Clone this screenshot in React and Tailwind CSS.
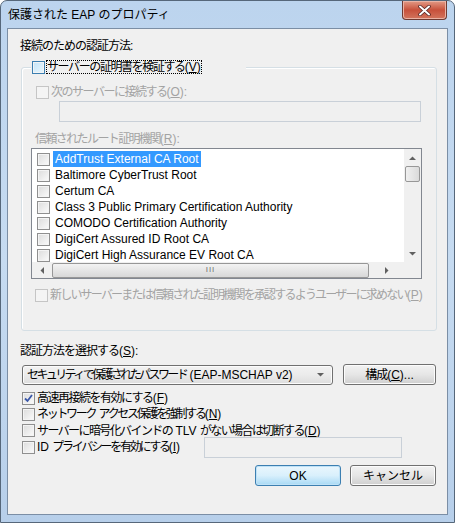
import React from 'react';

const font = { fontFamily: '"Liberation Sans", "Noto Sans CJK JP", sans-serif' };

const certs = [
  'AddTrust External CA Root',
  'Baltimore CyberTrust Root',
  'Certum CA',
  'Class 3 Public Primary Certification Authority',
  'COMODO Certification Authority',
  'DigiCert Assured ID Root CA',
  'DigiCert High Assurance EV Root CA',
];

// latin run inside a tightened Japanese label
const L = ({ children }) => <span className="tracking-normal">{children}</span>;
// access key, e.g. (V)
const Key = ({ k }) => (
  <span className="tracking-normal">
    (<u>{k}</u>)
  </span>
);

// Win7-style checkbox
const Check = ({ state = 'normal', checked = false }) => {
  let box = 'border-[#8f8f8f] bg-gradient-to-br from-[#dcdcdc] to-[#fbfbfb]';
  if (state === 'disabled') box = 'border-[#c5c5c5] bg-[#f4f4f4]';
  if (state === 'hot') box = 'border-[#3c7fb1] bg-gradient-to-br from-[#c4e5f9] to-[#e9f6fd]';
  return (
    <span className={`relative inline-block w-[13px] h-[13px] shrink-0 border ${box} shadow-[inset_0_0_0_1px_#f4f4f4]`}>
      {checked && (
        <svg className="absolute left-[1px] top-[1px]" width="9" height="9" viewBox="0 0 9 9">
          <path d="M1 4.5 L3.5 7 L8 1" fill="none" stroke="#3a57a8" strokeWidth="1.8" />
        </svg>
      )}
    </span>
  );
};

const Arrow = ({ dir }) => {
  const paths = {
    up: 'M0 4 L3.5 0.5 L7 4 Z',
    down: 'M0 0 L7 0 L3.5 3.5 Z',
    left: 'M4 0 L4 7 L0.5 3.5 Z',
    right: 'M0 0 L3.5 3.5 L0 7 Z',
  };
  const vertical = dir === 'up' || dir === 'down';
  return (
    <svg width={vertical ? 7 : 4} height={vertical ? 4 : 7} viewBox={vertical ? '0 0 7 4' : '0 0 4 7'}>
      <path d={paths[dir]} fill="#606060" />
    </svg>
  );
};

const Button = ({ children, primary }) => (
  <div
    className={`w-[86px] h-[21px] flex items-center justify-center rounded-[3px] border text-[12px] text-black ${
      primary
        ? 'border-[#3c7fb1] bg-gradient-to-b from-[#eaf6fd] via-[#d9f0fc] to-[#a7d9f5] shadow-[inset_0_0_0_1px_#bfe2f7]'
        : 'border-[#707070] bg-gradient-to-b from-[#f2f2f2] via-[#e6e6e6] to-[#cfcfcf] shadow-[inset_0_0_0_1px_#fcfcfc]'
    }`}
  >
    {children}
  </div>
);

export default function App() {
  return (
    <div style={font} className="w-[455px] h-[523px] overflow-hidden bg-white">
      <div className="w-[455px] h-[523px] flex flex-col rounded-t-[7px] border border-[#56677a] bg-gradient-to-b from-[#bcd4ee] via-[#c6dbf1] to-[#b7cfea] px-[6px] pb-[7px]">
        {/* title bar */}
        <div className="h-[27px] flex items-start justify-between">
          <div className="pt-[4px] pl-[1px] text-[12px] leading-[20px] text-black">保護された EAP のプロパティ</div>
          <div className="mr-[1px] w-[45px] h-[19px] rounded-b-[4px] border border-t-0 border-[#6e3a32] bg-gradient-to-b from-[#e29a86] via-[#c7503b] to-[#d2745d] flex items-center justify-center shadow-[inset_0_0_0_1px_#eab3a5]">
            <svg width="13" height="11" viewBox="0 0 13 11">
              <path d="M2 1.5 L11 9.5 M11 1.5 L2 9.5" stroke="#4a2020" strokeWidth="3.4" strokeLinecap="round" />
              <path d="M2 1.5 L11 9.5 M11 1.5 L2 9.5" stroke="#ffffff" strokeWidth="2" strokeLinecap="round" />
            </svg>
          </div>
        </div>

        {/* client area */}
        <div className="flex-1 border border-[#7b8ea5] bg-[#f0f0f0] pl-[12px] pr-[11px] pt-[9px] text-[12px] leading-[16px] tracking-[-1px] text-black">
          <div>接続のための認証方法:</div>

          {/* group box */}
          <div className="relative mt-[13px] ml-[1px] w-[416px] rounded-[3px] border border-[#d5dfe5] pt-[16px] pb-[27px] shadow-[inset_1px_1px_0_#ffffff]">
            <div className="absolute -top-[8px] left-[9px] flex items-center gap-[1px] bg-[#f0f0f0] pr-[44px] pl-[1px]">
              <Check state="hot" />
              <span className="px-[1px] leading-[14px] outline outline-1 outline-dotted outline-[#000] -outline-offset-1 whitespace-nowrap tracking-[-1.4px]">サーバーの証明書を検証する<Key k="V" /></span>
            </div>

            <div className="ml-[14px] flex items-center gap-[2px] text-[#a3a3a3]">
              <Check state="disabled" />
              <span className="tracking-[-1.5px]">次のサーバーに接続する<Key k="O" />:</span>
            </div>
            <div className="mt-[1px] ml-[37px] w-[362px] h-[21px] border border-[#c9d0d8] bg-[#f0f0f0]" />

            <div className="mt-[9px] ml-[13px] text-[#a3a3a3] tracking-[-1.6px]">信頼されたルート証明機関<Key k="R" />:</div>

            {/* list */}
            <div className="mt-[1px] ml-[9px] w-[391px] h-[131px] border border-[#828790] bg-white flex flex-col tracking-normal">
              <div className="flex flex-1 min-h-0">
                <div className="flex-1 pt-[2px] pl-[5px] overflow-hidden">
                  {certs.map((c, i) => (
                    <div key={c} className="h-[16px] flex items-center gap-[3px] whitespace-nowrap">
                      <Check />
                      <span className={`px-[2px] ${i === 0 ? 'bg-[#3399ff] text-white' : ''}`}>{c}</span>
                    </div>
                  ))}
                </div>
                {/* vertical scrollbar */}
                <div className="w-[17px] bg-[#f0f0f0] flex flex-col items-center">
                  <div className="h-[17px] flex items-center justify-center"><Arrow dir="up" /></div>
                  <div className="w-[15px] h-[16px] rounded-[2px] border border-[#979797] bg-gradient-to-r from-[#f0f0f0] to-[#dadada]" />
                  <div className="flex-1" />
                  <div className="h-[17px] flex items-center justify-center"><Arrow dir="down" /></div>
                </div>
              </div>
              {/* horizontal scrollbar */}
              <div className="h-[16px] flex">
                <div className="flex-1 bg-[#f0f0f0] flex items-center">
                  <div className="w-[20px] flex justify-center"><Arrow dir="left" /></div>
                  <div className="w-[317px] h-[15px] rounded-[2px] border border-[#979797] bg-gradient-to-b from-[#f3f3f3] to-[#d8d8d8] flex items-center justify-center">
                    <span className="text-[8px] leading-[8px] text-[#707070] tracking-[1px]">III</span>
                  </div>
                  <div className="flex-1 flex justify-center"><Arrow dir="right" /></div>
                </div>
                <div className="w-[17px] bg-[#f0f0f0]" />
              </div>
            </div>

            <div className="mt-[8px] ml-[13px] flex items-center gap-[2px] text-[#a3a3a3] whitespace-nowrap">
              <Check state="disabled" />
              <span className="tracking-[-1.8px]">新しいサーバーまたは信頼された証明機関を承認するようユーザーに求めない<Key k="P" /></span>
            </div>
          </div>

          <div className="mt-[12px]">認証方法を選択する<Key k="S" />:</div>

          <div className="mt-[5px] flex items-center">
            <div className="ml-[2px] w-[311px] h-[20px] rounded-[3px] border border-[#707070] bg-gradient-to-b from-[#f2f2f2] via-[#ebebeb] to-[#dddddd] flex items-center pl-[4px] pr-[8px] shadow-[inset_0_0_0_1px_#fcfcfc]">
              <span className="flex-1 whitespace-nowrap tracking-[-2.6px]">セキュリティで保護されたパスワード<L> (EAP-MSCHAP v2)</L></span>
              <Arrow dir="down" />
            </div>
            <div className="ml-[10px] w-[93px] h-[21px] rounded-[3px] border border-[#707070] bg-gradient-to-b from-[#f2f2f2] via-[#e6e6e6] to-[#cfcfcf] flex items-center justify-center shadow-[inset_0_0_0_1px_#fcfcfc]">
              構成<Key k="C" /><L>...</L>
            </div>
          </div>

          <div className="mt-[5px] ml-[2px] flex flex-col whitespace-nowrap">
            <div className="h-[16px] flex items-center gap-[2px]"><Check checked /><span className="tracking-[-1.5px]">高速再接続を有効にする<Key k="F" /></span></div>
            <div className="h-[16px] flex items-center gap-[2px]"><Check /><span className="tracking-[-2.3px]">ネットワーク<L> </L>アクセス保護を強制する<Key k="N" /></span></div>
            <div className="h-[17px] flex items-center gap-[2px]"><Check /><span className="tracking-[-1.6px]">サーバーに暗号化バインドの<L> TLV </L>がない場合は切断する<Key k="D" /></span></div>
            <div className="h-[16px] flex items-center gap-[2px]">
              <Check />
              <span className="w-[165px] tracking-[-2.3px]"><L>ID </L>プライバシーを有効にする<Key k="I" /></span>
              <div className="w-[198px] h-[21px] border border-[#c9d0d8] bg-[#f0f0f0]" />
            </div>
          </div>

          <div className="mt-[10px] flex justify-end gap-[9px] tracking-normal">
            <Button primary>OK</Button>
            <Button>キャンセル</Button>
          </div>
        </div>
      </div>
    </div>
  );
}
